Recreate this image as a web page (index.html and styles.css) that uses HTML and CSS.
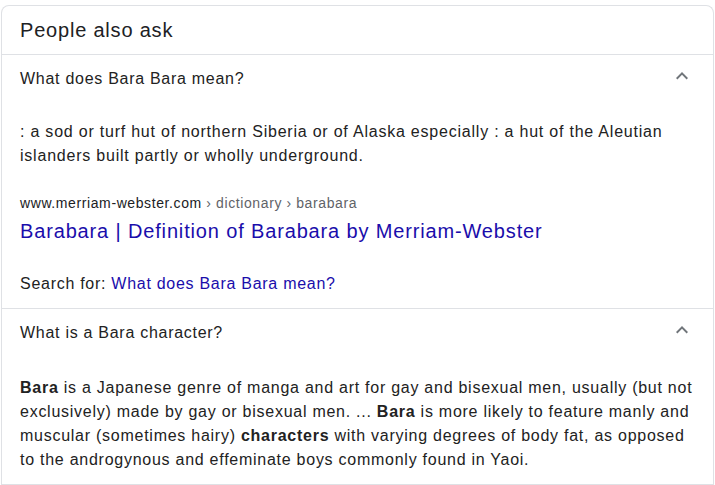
FILE: index.html
```html
<!DOCTYPE html>
<html lang="en-US">
<head>
  <meta charset="UTF-8">
  <meta name="viewport" content="width=device-width, initial-scale=1.0">
  <title>People also ask</title>
  <link rel="stylesheet" href="styles.css">
</head>
<body>
  <div class="paa-card">
    <div class="paa-header">People also ask</div>

    <div class="paa-item">
      <div class="paa-question">
        <span>What does Bara Bara mean?</span>
        <svg class="chevron" width="24" height="24" viewBox="0 0 24 24"><path d="M7.41 15.41L12 10.83l4.59 4.58L18 14l-6-6-6 6z"/></svg>
      </div>
      <div class="paa-answer">
        <p class="answer-text">: a sod or turf hut of northern Siberia or of Alaska especially : a hut of the Aleutian islanders built partly or wholly underground.</p>
        <div class="source-url">www.merriam-webster.com <span class="crumb">› dictionary › barabara</span></div>
        <a class="source-title" href="#">Barabara | Definition of Barabara by Merriam-Webster</a>
        <p class="search-for">Search for: <a href="#">What does Bara Bara mean?</a></p>
      </div>
    </div>

    <div class="paa-item">
      <div class="paa-question">
        <span>What is a Bara character?</span>
        <svg class="chevron" width="24" height="24" viewBox="0 0 24 24"><path d="M7.41 15.41L12 10.83l4.59 4.58L18 14l-6-6-6 6z"/></svg>
      </div>
      <div class="paa-answer paa-answer-long">
        <p class="answer-text"><b>Bara</b> is a Japanese genre of manga and art for gay and bisexual men, usually (but not exclusively) made by gay or bisexual men. ... <b>Bara</b> is more likely to feature manly and muscular (sometimes hairy) <b>characters</b> with varying degrees of body fat, as opposed to the androgynous and effeminate boys commonly found in Yaoi.</p>
      </div>
    </div>
  </div>
</body>
</html>
```

FILE: styles.css
```css
body {
  font-family: 'Liberation Sans', Arial, sans-serif;
  margin: 0;
  padding: 0;
  background-color: #fff;
  color: #222;
}
.paa-card {
  margin: 5px 1px 0 1px;
  border: 1px solid #dfe1e5;
  border-bottom: none;
  border-radius: 8px 8px 0 0;
  height: 600px;
}
.paa-header {
  height: 48px;
  line-height: 48px;
  padding: 0 18px;
  font-size: 20px;
  letter-spacing: 0.8px;
  color: #202124;
  border-bottom: 1px solid #dfe1e5;
}
.paa-item {
  border-bottom: 1px solid #dfe1e5;
}
.paa-question {
  display: flex;
  align-items: center;
  justify-content: space-between;
  height: 48px;
  padding: 0 19px 0 18px;
  font-size: 16px;
  letter-spacing: 0.72px;
  color: #222;
}
.chevron {
  fill: #70757a;
  margin-bottom: 6px;
}
.paa-answer {
  padding: 17px 18px 12px 18px;
}
.paa-answer-long {
  padding: 19px 12px 12px 18px;
}
.paa-answer-long .answer-text {
  letter-spacing: 0.74px;
}
.answer-text {
  margin: 0;
  font-size: 16px;
  line-height: 24px;
  letter-spacing: 0.78px;
}
.source-url {
  margin-top: 24px;
  font-size: 14px;
  line-height: 22px;
  letter-spacing: 0.6px;
  color: #202124;
}
.source-url .crumb {
  color: #5f6368;
}
.source-title {
  display: block;
  padding-top: 4px;
  font-size: 20px;
  line-height: 26px;
  letter-spacing: 0.85px;
  color: #1a0dab;
  text-decoration: none;
}
.search-for {
  margin: 28px 0 0 0;
  font-size: 16px;
  line-height: 24px;
  letter-spacing: 0.72px;
}
.search-for a {
  color: #1a0dab;
  text-decoration: none;
}
```
